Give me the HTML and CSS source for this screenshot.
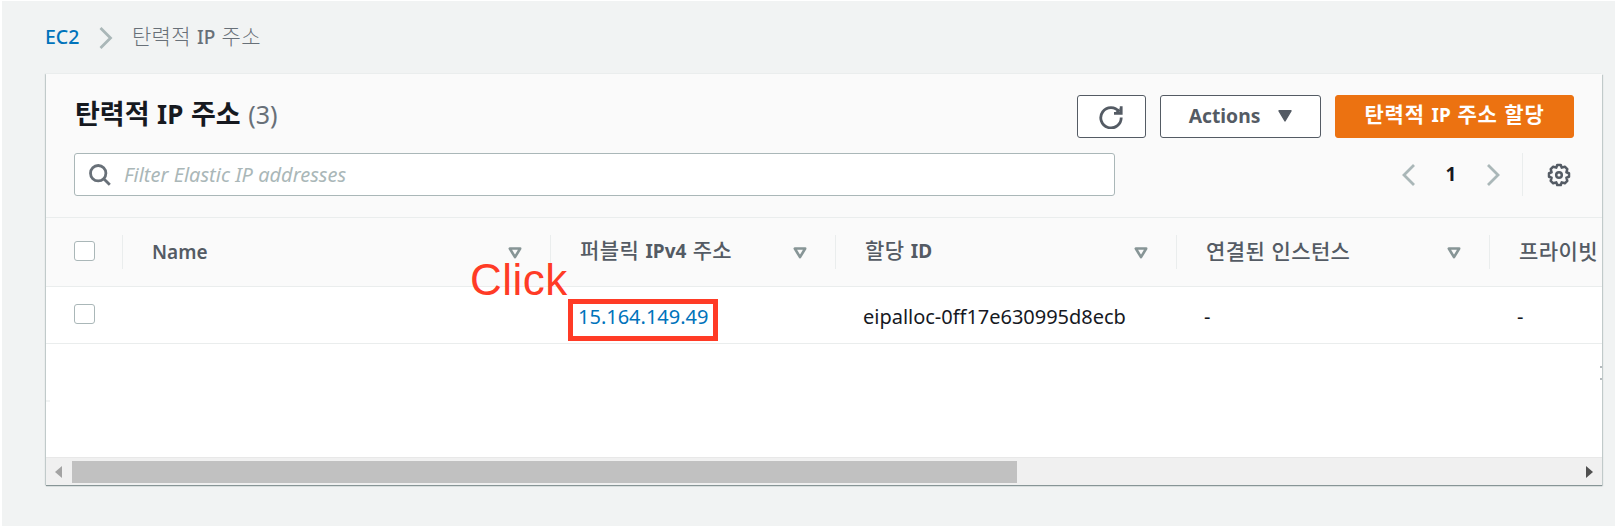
FILE: index.html
```html
<!DOCTYPE html>
<html lang="ko">
<head>
<meta charset="utf-8">
<title>탄력적 IP 주소</title>
<link rel="stylesheet" href="styles.css">
</head>
<body>
<div class="page">
  <nav class="crumbs">
    <a class="link crumb-root">EC2</a>
    <svg class="crumb-sep" width="14" height="22" viewBox="0 0 14 22"><path d="M1.5 1 11.5 11 1.5 21" fill="none" stroke="#aab7b8" stroke-width="2.8"/></svg>
    <span class="crumb-current">탄력적 <span class="latin">IP</span> 주소</span>
  </nav>
  <section class="panel">
    <header class="panel-head">
      <div class="title-row">
        <h1 class="title">탄력적 <span class="latin">IP</span> 주소 <span class="count">(3)</span></h1>
        <div class="buttons">
          <button class="btn btn-refresh"><svg width="24" height="24" viewBox="0 0 24 24" fill="none" stroke="#545b64" stroke-width="2.8"><path d="M20.2 6.7A10.2 10.2 0 1 0 22.2 12.6M22.2 1.2V8.4H15"/><path d="M20.6 3v4h-4z" fill="#545b64" stroke="none"/></svg></button>
          <button class="btn btn-actions"><span>Actions</span><svg width="14" height="12" viewBox="0 0 14 12"><path d="M1 .8h12L7 11z" fill="#545b64" stroke="#545b64" stroke-width="1.4" stroke-linejoin="round"/></svg></button>
          <button class="btn btn-primary"><span>탄력적 <span class="latin">IP</span> 주소 할당</span></button>
        </div>
      </div>
      <div class="filter-row">
        <div class="filter">
          <svg width="22" height="22" viewBox="0 0 22 22" fill="none" stroke="#687078" stroke-width="2.8"><circle cx="9.2" cy="9.2" r="7.7"/><path d="M14.7 14.7 20.8 20.8"/></svg>
          <span class="placeholder">Filter Elastic IP addresses</span>
        </div>
        <div class="pager">
          <svg width="14" height="22" viewBox="0 0 14 22"><path d="M12 1 2 11 12 21" fill="none" stroke="#aab7b8" stroke-width="2.8"/></svg>
          <span class="page-number">1</span>
          <svg width="14" height="22" viewBox="0 0 14 22"><path d="M2 1 12 11 2 21" fill="none" stroke="#aab7b8" stroke-width="2.8"/></svg>
        </div>
        <div class="settings">
          <svg width="24" height="24" viewBox="-12 -12 24 24" fill="none" stroke="#545b64" stroke-width="2.5" stroke-linejoin="round"><path d="M-1.8-10H1.8L2.7-7.4 5.8-8.3 8.3-5.8 7.4-2.7 10-1.8V1.8L7.4 2.7 8.3 5.8 5.8 8.3 2.7 7.4 1.8 10H-1.8L-2.7 7.4-5.8 8.3-8.3 5.8-7.4 2.7-10 1.8V-1.8L-7.4-2.7-8.3-5.8-5.8-8.3-2.7-7.4Z"/><circle r="2.8"/></svg>
        </div>
      </div>
    </header>
    <div class="table">
      <div class="row head">
        <div class="cell check"><i class="box"></i></div>
        <div class="cell"><span class="latin name">Name</span><svg class="sort" viewBox="0 0 14 12"><path d="M1.8 1.5H12.2L7 10.2z"/></svg></div>
        <div class="cell"><span class="label">퍼블릭 <span class="latin">IPv4</span> 주소</span><svg class="sort" viewBox="0 0 14 12"><path d="M1.8 1.5H12.2L7 10.2z"/></svg></div>
        <div class="cell"><span class="label">할당 <span class="latin">ID</span></span><svg class="sort" viewBox="0 0 14 12"><path d="M1.8 1.5H12.2L7 10.2z"/></svg></div>
        <div class="cell"><span class="label">연결된 인스턴스</span><svg class="sort" viewBox="0 0 14 12"><path d="M1.8 1.5H12.2L7 10.2z"/></svg></div>
        <div class="cell last"><span class="label">프라이빗</span></div>
      </div>
      <div class="row data">
        <div class="cell check"><i class="box"></i></div>
        <div class="cell"></div>
        <div class="cell"><a class="link ip">15.164.149.49</a></div>
        <div class="cell"><span class="alloc">eipalloc-0ff17e630995d8ecb</span></div>
        <div class="cell">-</div>
        <div class="cell last">-</div>
      </div>
    </div>
    <div class="blank"><i class="row-edge"></i><i class="clipped"></i></div>
    <div class="scrollbar">
      <svg width="7" height="12" viewBox="0 0 7 12"><path d="M7 0V12L0 6z" fill="#a3a3a3"/></svg>
      <div class="track"><div class="thumb"></div></div>
      <svg width="7" height="12" viewBox="0 0 7 12"><path d="M0 0V12L7 6z" fill="#505050"/></svg>
    </div>
  </section>
  <div class="callout-text">Click</div>
  <div class="callout-box"></div>
</div>
</body>
</html>
```
FILE: styles.css
```css
* { box-sizing: border-box; }
body { margin: 0; background: #fff; }
svg { display: block; flex: none; }
.page {
  position: relative;
  width: 1615px;
  height: 526px;
  border-left: 2px solid #fff;
  border-top: 1px solid #fff;
  background: #f1f3f3;
  font-family: "Noto Sans", "Noto Sans CJK KR", sans-serif;
  font-size: 20px;
  line-height: 28px;
  color: #16191f;
  overflow: hidden;
  white-space: nowrap;
}
.link { color: #0073bb; }
.crumbs {
  display: flex;
  align-items: center;
  height: 73px;
  padding-left: 43px;
}
.crumb-root { width: 54px; padding-bottom: 2px; font-weight: 500; font-size: 19.5px; }
.crumb-sep { margin-right: 19px; }
.crumb-current { padding-bottom: 4px; font-family: "Noto Sans CJK KR", sans-serif; font-weight: 300; font-size: 21px; letter-spacing: .3px; color: #687078; }
.crumb-current .latin { font-weight: 500; }
.latin { font-family: "Noto Sans", sans-serif; font-size: 19px; letter-spacing: 0; }
.panel {
  display: flex;
  flex-direction: column;
  width: 1556px;
  height: 411px;
  margin-left: 44px;
  background: #fff;
  box-shadow: 0 1px 1px #879596, 1px 1px 1px #aab7b880, -1px 0 1px #aab7b880;
}
.panel-head {
  height: 144px;
  padding: 20px 28px 0 28px;
  background: #fafafa;
  border-bottom: 1px solid #eaeded;
}
.title-row { display: flex; justify-content: space-between; height: 59px; }
.title {
  margin: 0;
  padding: 3px 0 0 1px;
  font-family: "Noto Sans CJK KR", sans-serif;
  font-size: 27px;
  line-height: 32px;
  font-weight: 700;
}
.title .latin { font-size: 26px; }
.count { font-family: "Noto Sans", sans-serif; font-size: 25px; font-weight: 400; color: #687078; }
.buttons { display: flex; gap: 14px; padding-top: 1px; }
.btn {
  display: flex;
  align-items: center;
  justify-content: center;
  height: 43px;
  padding: 0 0 2px;
  border: 1px solid #545b64;
  border-radius: 3px;
  background: #fff;
  color: #545b64;
  font: 700 19.3px/28px "Noto Sans", sans-serif;
}
.btn-refresh { width: 69px; padding: 0 1px 0 0; }
.btn-actions { width: 161px; gap: 18px; }
.btn-primary {
  width: 239px;
  height: 43px;
  padding-bottom: 5px;
  border-color: #ec7211;
  background: #ec7211;
  color: #fff;
  font-family: "Noto Sans CJK KR", sans-serif;
  font-size: 21px;
  letter-spacing: .8px;
}
.filter-row { display: flex; align-items: center; height: 43px; }
.filter {
  display: flex;
  align-items: center;
  gap: 13px;
  width: 1041px;
  height: 43px;
  padding-left: 14px;
  border: 1px solid #aab7b8;
  border-radius: 3px;
  background: #fff;
}
.placeholder { font-style: italic; font-size: 20px; color: #aab7b8; }
.pager { display: flex; align-items: center; justify-content: space-between; width: 98px; margin-left: 287px; }
.page-number { padding-bottom: 2px; font-weight: 700; font-size: 19px; }
.settings { display: flex; align-items: center; height: 43px; margin-left: 22px; padding-left: 24px; border-left: 1px solid #eaeded; }
.row { display: grid; grid-template-columns: 77px 428px 285px 341px 313px 112px; overflow: hidden; }
.cell { display: flex; align-items: center; justify-content: space-between; }
.head { height: 69px; background: #fafafa; border-bottom: 1px solid #eaeded; color: #545b64; font-family: "Noto Sans CJK KR", sans-serif; font-weight: 600; font-size: 21px; }
.head .cell { height: 34px; margin-top: 17px; padding: 0 28px 0 29px; border-right: 1px solid #eaeded; }
.head .last, .data .last { border: 0; padding-right: 0; }
.head .check { padding: 0 0 2px 28px; }
.label { padding-bottom: 4px; font-weight: 500; letter-spacing: .4px; }
.label .latin { font-weight: 700; }
.sort { width: 14px; height: 12px; margin-top: 2px; fill: none; stroke: #879596; stroke-width: 2.6; stroke-linejoin: round; }
.box { width: 21px; height: 20px; border: 1.5px solid #aab7b8; border-radius: 3px; background: #fff; }
.data { height: 57px; border-bottom: 1px solid #eaeded; }
.data .cell { padding: 4px 0 0 27px; }
.data .check { padding: 0 0 3px 28px; }
.alloc { letter-spacing: -.02px; }
.blank { position: relative; flex: 1; }
.row-edge { position: absolute; left: 0; top: 56px; width: 4px; height: 2px; background: #f2f4f4; }
.clipped { position: absolute; right: 0; top: 22px; width: 2px; height: 14px; border: solid #b4babd; border-width: 2px 0; }
.scrollbar { display: flex; align-items: center; height: 28px; padding: 0 9px 0 9px; background: #f0f0f0; border-top: 1px solid #e8e8e8; }
.track { flex: 1; height: 22px; padding-left: 10px; }
.thumb { width: 945px; height: 22px; background: #c1c1c1; }
.callout-text { position: absolute; left: 468px; top: 255px; font: 44px/48px "Liberation Sans", Arial, sans-serif; letter-spacing: .5px; color: #ff3b26; }
.callout-box { position: absolute; left: 566px; top: 298px; width: 150px; height: 42px; border: 5px solid #ff3b26; }
```
